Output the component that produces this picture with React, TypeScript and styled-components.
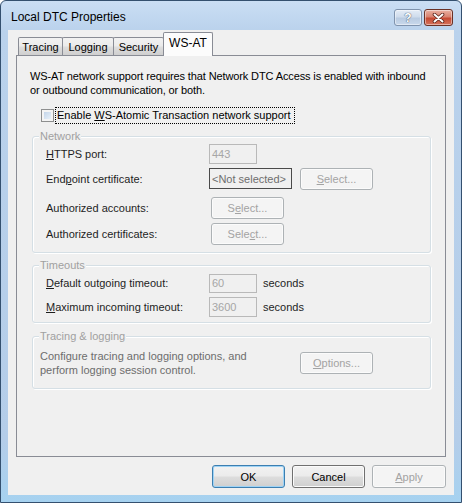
import React from "react"
import styled, { createGlobalStyle } from "styled-components"

const GlobalStyle = createGlobalStyle`
  html, body {
    margin: 0;
    padding: 0;
    background: #ffffff;
  }
  body {
    font-family: "Liberation Sans", Arial, sans-serif;
    font-size: 11px;
    color: #000000;
  }
`

// Window chrome
const Window = styled.div`
  width: 462px;
  height: 503px;
  box-sizing: border-box;
  display: flex;
  flex-direction: column;
  border: 1px solid #34506f;
  border-radius: 6px 6px 0 0;
  padding: 0 7px 7px 7px;
  background: linear-gradient(to bottom, #cadef4 0px, #bad2ec 30px, #b4cde9 440px, #a6d2f0 100%);
`

const TitleBar = styled.div`
  height: 29px;
  flex: none;
  display: flex;
  align-items: flex-start;
  padding: 8px 1px 0 3px;
  box-sizing: border-box;
`

const Title = styled.span`
  font-size: 12px;
  line-height: 16px;
  color: #000000;
  flex: 1;
`

const CaptionButtons = styled.div`
  display: flex;
  gap: 2px;
`

const CaptionButton = styled.div<{ $close?: boolean }>`
  width: ${(p) => (p.$close ? "29px" : "28px")};
  height: 17px;
  box-sizing: border-box;
  border-radius: 3px;
  display: flex;
  align-items: center;
  justify-content: center;
  border: 1px solid ${(p) => (p.$close ? "#6a3126" : "#7f93ad")};
  background: ${(p) =>
    p.$close
      ? "linear-gradient(to bottom, #e9b1a2 0%, #d98370 45%, #c54a33 55%, #d6735c 100%)"
      : "linear-gradient(to bottom, #e4ecf6 0%, #cfdcec 45%, #b9cbe1 55%, #c9d9ec 100%)"};
  box-shadow: inset 0 0 0 1px rgba(255, 255, 255, 0.45);
  color: #ffffff;
  font-size: 12px;
  font-weight: bold;
  text-shadow: 0 0 1px #44546a, 0 0 1px #44546a;
`

const Client = styled.div`
  flex: 1;
  display: flex;
  flex-direction: column;
  background: #f0f0f0;
  padding: 2px 8px 7px 8px;
  min-height: 0;
`

// Tabs
const TabRow = styled.div`
  height: 23px;
  flex: none;
  display: flex;
  align-items: flex-end;
  padding-left: 2px;
  position: relative;
  z-index: 2;
`

const Tab = styled.div<{ $active?: boolean; $width: number }>`
  width: ${(p) => p.$width}px;
  height: ${(p) => (p.$active ? "24px" : "18px")};
  margin-bottom: ${(p) => (p.$active ? "-1px" : "0")};
  margin-left: -1px;
  box-sizing: border-box;
  border: 1px solid #898c95;
  border-bottom: 0;
  border-radius: 2px 2px 0 0;
  display: flex;
  align-items: center;
  justify-content: center;
  padding-bottom: ${(p) => (p.$active ? "4px" : "0")};
  background: ${(p) =>
    p.$active ? "#fcfcfc" : "linear-gradient(to bottom, #f2f2f2 0%, #ebebeb 45%, #dddddd 55%, #cfcfcf 100%)"};
  color: #000000;
  font-size: ${(p) => (p.$active ? "12px" : "11px")};
  &:first-child {
    margin-left: 0;
  }
`

const Panel = styled.div`
  flex: 1;
  display: flex;
  flex-direction: column;
  border: 1px solid #898c95;
  padding: 13px 13px 0 13px;
  background: #f0f0f0;
`

const Intro = styled.p`
  margin: 0;
  line-height: 14px;
  white-space: nowrap;
  letter-spacing: -0.12px;
  color: #000000;
`

const CheckRow = styled.div`
  margin-top: 10px;
  height: 16px;
  display: flex;
  align-items: center;
  padding-left: 11px;
`

const CheckBox = styled.div`
  width: 13px;
  height: 13px;
  flex: none;
  box-sizing: border-box;
  border: 1px solid #8e8f8f;
  background: linear-gradient(135deg, #b9cde4 0%, #dbe7f4 60%, #f4f8fc 100%);
  box-shadow: inset 0 0 0 2px #f4f4f4;
`

const CheckLabel = styled.span`
  margin-left: 2px;
  padding: 1px 3px 1px 1px;
  line-height: 13px;
  white-space: nowrap;
  outline: 1px dotted #000000;
  outline-offset: 0;
`

const Key = styled.span`
  text-decoration: underline;
  text-underline-offset: 1px;
`

// Group boxes
const GroupBox = styled.div<{ $top: number; $pad: string }>`
  position: relative;
  margin: ${(p) => p.$top}px 1px 0 2px;
  border: 1px solid #d5dfe5;
  border-radius: 3px;
  padding: ${(p) => p.$pad};
  box-shadow: inset 1px 1px 0 #ffffff, 1px 1px 0 #ffffff;
`

const GroupTitle = styled.span`
  position: absolute;
  top: -7px;
  left: 6px;
  padding: 0 1px;
  line-height: 13px;
  background: #f0f0f0;
  color: #a0a0a0;
`

const FieldRow = styled.div<{ $top?: number; $height: number }>`
  display: flex;
  align-items: center;
  height: ${(p) => p.$height}px;
  margin-top: ${(p) => p.$top ?? 0}px;
`

const FieldLabel = styled.span<{ $width?: number }>`
  width: ${(p) => p.$width ?? 163}px;
  flex: none;
  color: #1e1e1e;
`

const TextBox = styled.div<{ $width: number; $height: number; $dark?: boolean }>`
  width: ${(p) => p.$width}px;
  height: ${(p) => p.$height}px;
  flex: none;
  box-sizing: border-box;
  border: 1px solid ${(p) => (p.$dark ? "#4a4a4a" : "#b9b9b9")};
  background: #f0f0f0;
  color: ${(p) => (p.$dark ? "#6e6e6e" : "#a6a6a6")};
  display: flex;
  align-items: center;
  padding-left: 2px;
  white-space: nowrap;
  overflow: hidden;
`

const Unit = styled.span`
  margin-left: 6px;
  color: #1e1e1e;
`

const Button = styled.div<{ $width: number; $variant?: "default" | "normal" | "disabled" }>`
  width: ${(p) => p.$width}px;
  height: ${(p) => (p.$variant ? "23px" : "22px")};
  box-sizing: border-box;
  margin-left: ${(p) => (p.$variant ? "0" : "8px")};
  flex: none;
  border-radius: 3px;
  display: flex;
  align-items: center;
  justify-content: center;
  border: 1px solid
    ${(p) => (p.$variant === "default" ? "#3c7fb1" : p.$variant === "normal" ? "#707070" : "#adb2b5")};
  background: ${(p) =>
    p.$variant === "default" || p.$variant === "normal"
      ? "linear-gradient(to bottom, #f2f2f2 0%, #ebebeb 48%, #dddddd 52%, #cfcfcf 100%)"
      : "#f4f4f4"};
  box-shadow: ${(p) =>
    p.$variant === "default" ? "inset 0 0 0 1px #9fd3f5" : "inset 0 0 0 1px #fbfbfb"};
  color: ${(p) => (p.$variant === "default" || p.$variant === "normal" ? "#000000" : "#a3a3a3")};
`

const FirstButton = styled(Button)`
  margin-left: 0;
`

const NoteRow = styled.div`
  display: flex;
  align-items: center;
`

const Note = styled.p`
  margin: 0;
  width: 260px;
  flex: none;
  line-height: 14px;
  color: #6d6d6d;
`

const ButtonBar = styled.div`
  flex: none;
  margin-top: 8px;
  display: flex;
  justify-content: flex-end;
  gap: 7px;
`

function CloseGlyph() {
  return (
    <svg width="13" height="10" viewBox="0 0 13 10">
      <path d="M2.5 1.5 L10.5 8.5 M10.5 1.5 L2.5 8.5" stroke="#5a2218" strokeWidth="3.6" strokeLinecap="round" />
      <path d="M2.5 1.5 L10.5 8.5 M10.5 1.5 L2.5 8.5" stroke="#ffffff" strokeWidth="2" strokeLinecap="round" />
    </svg>
  )
}

export default function App() {
  return (
    <>
      <GlobalStyle />
      <Window>
        <TitleBar>
          <Title>Local DTC Properties</Title>
          <CaptionButtons>
            <CaptionButton>?</CaptionButton>
            <CaptionButton $close>
              <CloseGlyph />
            </CaptionButton>
          </CaptionButtons>
        </TitleBar>

        <Client>
          <TabRow>
            <Tab $width={45}>Tracing</Tab>
            <Tab $width={52}>Logging</Tab>
            <Tab $width={51}>Security</Tab>
            <Tab $width={50} $active>
              WS-AT
            </Tab>
          </TabRow>

          <Panel>
            <Intro>
              WS-AT network support requires that Network DTC Access is enabled with inbound
              <br />
              or outbound communication, or both.
            </Intro>

            <CheckRow>
              <CheckBox />
              <CheckLabel>
                Enable <Key>W</Key>S-Atomic Transaction network support
              </CheckLabel>
            </CheckRow>

            {/* Network */}
            <GroupBox $top={13} $pad="7px 12px 7px 13px">
              <GroupTitle>Network</GroupTitle>
              <FieldRow $height={20}>
                <FieldLabel>
                  <Key>H</Key>TTPS port:
                </FieldLabel>
                <TextBox $width={48} $height={20}>
                  443
                </TextBox>
              </FieldRow>
              <FieldRow $top={3} $height={23}>
                <FieldLabel>
                  End<Key>p</Key>oint certificate:
                </FieldLabel>
                <TextBox $width={83} $height={21} $dark>
                  &lt;Not selected&gt;
                </TextBox>
                <Button $width={73}>
                  <span>
                    <Key>S</Key>elect...
                  </span>
                </Button>
              </FieldRow>
              <FieldRow $top={7} $height={22}>
                <FieldLabel $width={165}>Authorized accounts:</FieldLabel>
                <FirstButton $width={73}>
                  <span>
                    S<Key>e</Key>lect...
                  </span>
                </FirstButton>
              </FieldRow>
              <FieldRow $top={4} $height={22}>
                <FieldLabel $width={165}>Authorized certificates:</FieldLabel>
                <FirstButton $width={73}>
                  <span>
                    Sele<Key>c</Key>t...
                  </span>
                </FirstButton>
              </FieldRow>
            </GroupBox>

            {/* Timeouts */}
            <GroupBox $top={12} $pad="7px 12px 5px 13px">
              <GroupTitle>Timeouts</GroupTitle>
              <FieldRow $height={20}>
                <FieldLabel>
                  <Key>D</Key>efault outgoing timeout:
                </FieldLabel>
                <TextBox $width={48} $height={19}>
                  60
                </TextBox>
                <Unit>seconds</Unit>
              </FieldRow>
              <FieldRow $top={4} $height={20}>
                <FieldLabel>
                  <Key>M</Key>aximum incoming timeout:
                </FieldLabel>
                <TextBox $width={48} $height={20}>
                  3600
                </TextBox>
                <Unit>seconds</Unit>
              </FieldRow>
            </GroupBox>

            {/* Tracing & logging */}
            <GroupBox $top={13} $pad="12px 12px 11px 7px">
              <GroupTitle>Tracing &amp; logging</GroupTitle>
              <NoteRow>
                <Note>
                  Configure tracing and logging options, and
                  <br />
                  perform logging session control.
                </Note>
                <FirstButton $width={73}>
                  <span>
                    <Key>O</Key>ptions...
                  </span>
                </FirstButton>
              </NoteRow>
            </GroupBox>
          </Panel>

          <ButtonBar>
            <Button $width={73} $variant="default">
              OK
            </Button>
            <Button $width={73} $variant="normal">
              Cancel
            </Button>
            <Button $width={74} $variant="disabled">
              <span>
                <Key>A</Key>pply
              </span>
            </Button>
          </ButtonBar>
        </Client>
      </Window>
    </>
  )
}
